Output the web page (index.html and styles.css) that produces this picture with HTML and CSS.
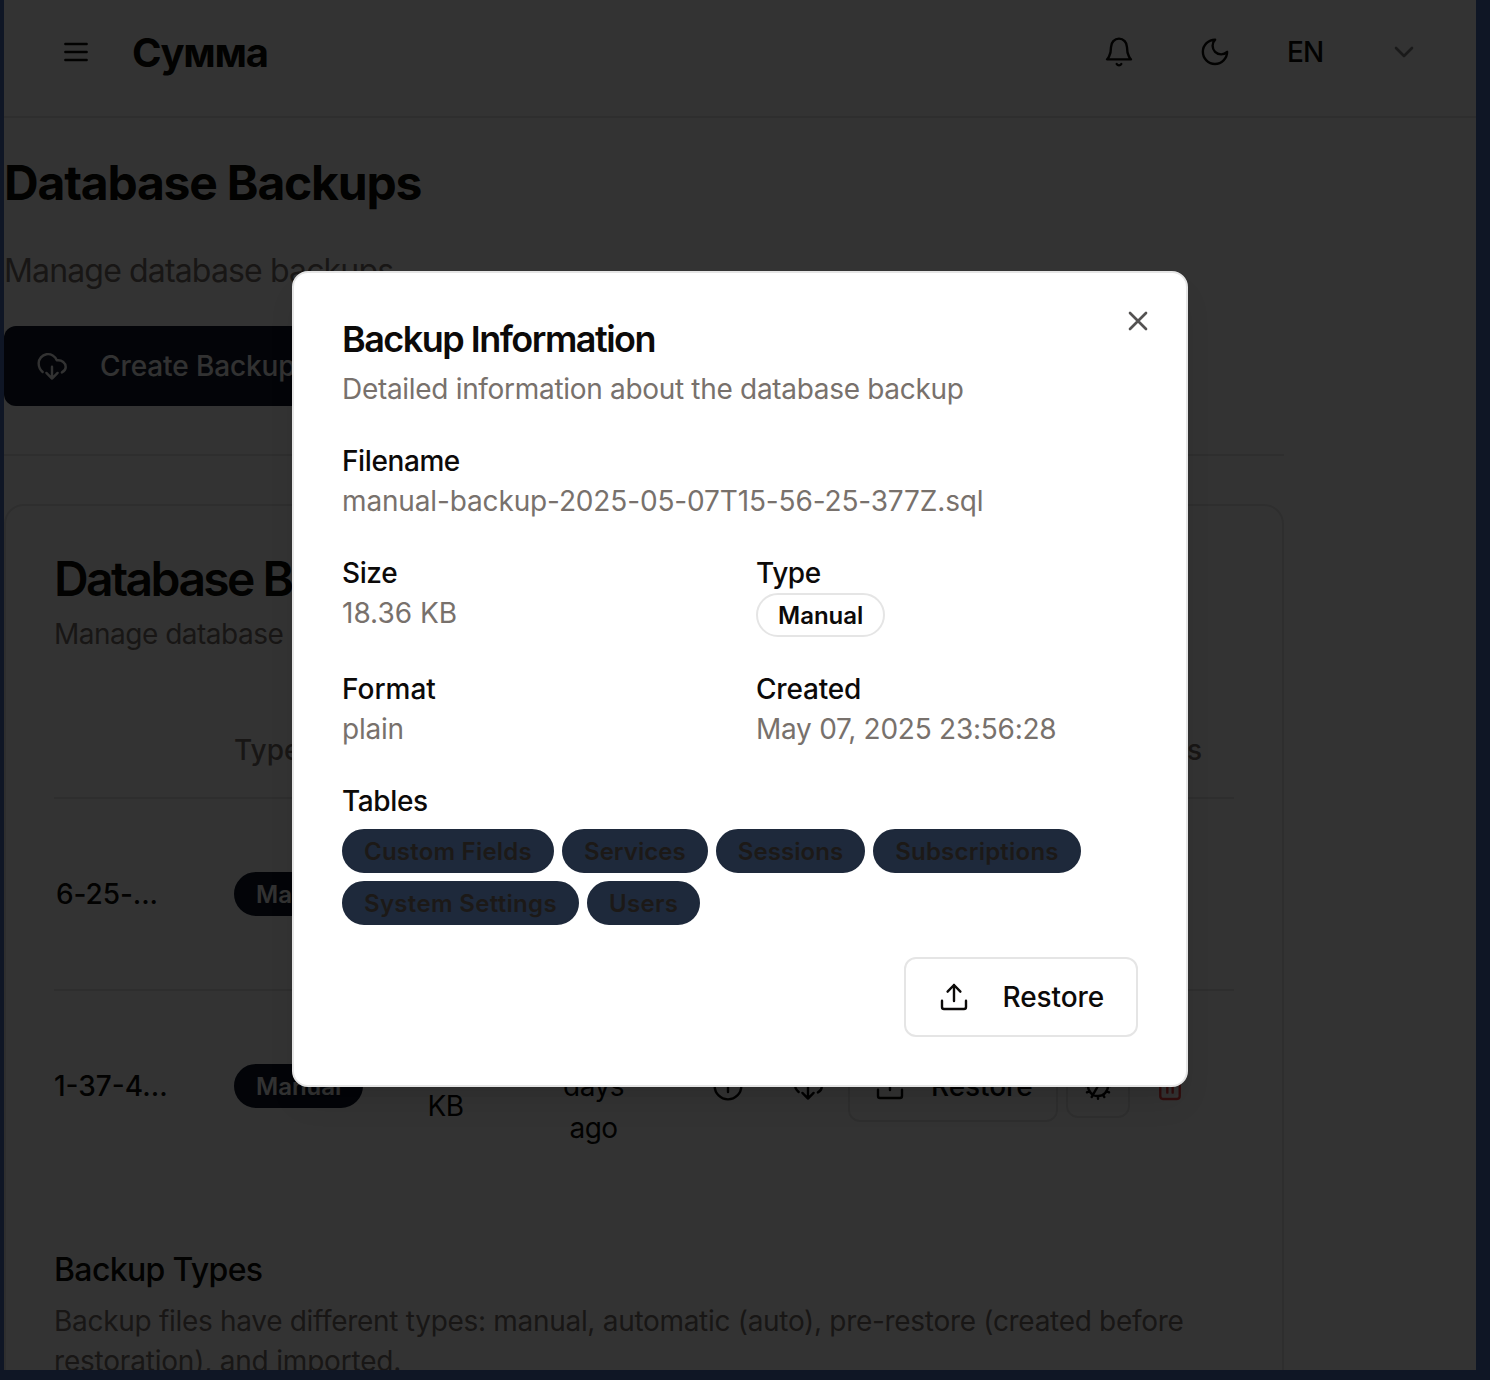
FILE: index.html
```html
<!DOCTYPE html>
<html lang="en">
<head>
<meta charset="utf-8">
<title>Database Backups</title>
<link rel="stylesheet" href="styles.css">
</head>
<body>
<svg class="sprite" aria-hidden="true">
  <symbol id="i-menu" viewBox="0 0 24 24"><path d="M4 6h16M4 12h16M4 18h16"/></symbol>
  <symbol id="i-bell" viewBox="0 0 24 24"><path d="M18 8.4c0-1.697-.632-3.325-1.757-4.525C15.117 2.675 13.59 2 12 2c-1.591 0-3.117.674-4.243 1.875C6.632 5.075 6 6.703 6 8.4 6 15.1 3 17.5 3 17.5h18s-3-2.4-3-9.1zM13.73 21a1.999 1.999 0 01-3.46 0"/></symbol>
  <symbol id="i-moon" viewBox="0 0 24 24"><path d="M12.1 2.8A6.3 6.3 0 0 0 21.1 11.9A9.1 9.1 0 1 1 12.1 2.8Z"/></symbol>
  <symbol id="i-chevron" viewBox="0 0 24 24"><path d="M6 9l6 6 6-6"/></symbol>
  <symbol id="i-cloud" viewBox="0 0 24 24"><path d="M5 16.5C3.2 15 2 12.5 2 10A7 7 0 0 1 15.6 7.8C19.5 7.3 22.3 9.8 22.3 12.8C22.3 14.5 21 16 19.4 16.8M12 12.6v8.8M7.8 17.2l4.2 4.2 4.2-4.2"/></symbol>
  <symbol id="i-upload" viewBox="0 0 24 24"><path d="M3 14.8V19.5Q3 21 4.5 21H19.5Q21 21 21 19.5V14.8M12 15V3M7.2 8L12 3l4.8 5"/></symbol>
  <symbol id="i-info" viewBox="0 0 24 24"><circle cx="12" cy="12" r="10"/><path d="M12 11v5.5M12 7.5v.01"/></symbol>
  <symbol id="i-gear" viewBox="0 0 24 24"><path d="M4.5 12a7.5 7.5 0 0015 0a7.5 7.5 0 10-15 0M12 12h7.5M12 12L8.25 5.5M12 12l-3.75 6.5M12 19.5V21.6M12 4.5V2.4M4.5 12H2.6M19.5 12h1.9M15.75 18.5l1 1.8M8.25 18.5l-1 1.8M18.5 15.75l1.8 1M5.5 15.75l-1.8 1M15.75 5.5l1-1.8M8.25 5.5l-1-1.8M18.5 8.25l1.8-1M5.5 8.25l-1.8-1"/></symbol>
  <symbol id="i-trash" viewBox="0 0 24 24"><path d="M4.7 7v12.5Q4.7 21.7 6.7 21.7H17.3Q19.3 21.7 19.3 19.5V7M2.5 6h19M8 6V3h8v3M10 11v6M14 11v6"/></symbol>
  <symbol id="i-close" viewBox="0 0 24 24"><path d="M18 6L6 18M6 6l12 12"/></symbol>
</svg>

<div class="app">
  <header class="topbar">
    <svg class="icon icon-menu"><use href="#i-menu"/></svg>
    <span class="brand">Сумма</span>
    <div class="topbar-actions">
      <svg class="icon"><use href="#i-bell"/></svg>
      <svg class="icon"><use href="#i-moon"/></svg>
      <div class="lang"><span class="lang-code">EN</span><svg class="icon icon-faded"><use href="#i-chevron"/></svg></div>
    </div>
  </header>

  <main class="page">
    <h1 class="page-title">Database Backups</h1>
    <p class="page-lead">Manage database backups</p>
    <button class="btn btn-primary"><svg class="icon"><use href="#i-cloud"/></svg><span class="btn-text">Create Backup</span></button>
    <hr class="divider">

    <section class="card">
      <h2 class="card-title">Database Backups</h2>
      <p class="card-lead">Manage database backups</p>

      <div class="table">
        <div class="row row-head">
          <span></span><span>Type</span><span></span><span></span><span class="actions-head">Actions</span>
        </div>
        <div class="row">
          <span class="name name-first">6-25-...</span>
          <span class="cell-type"><span class="pill pill-dark">Manual</span></span>
        </div>
        <div class="row row-last">
          <span class="name">1-37-4...</span>
          <span class="cell-type"><span class="pill pill-dark">Manual</span></span>
          <span class="cell-size">18.36<br>KB</span>
          <span class="cell-age">9<br>days<br>ago</span>
          <div class="row-actions">
            <div class="action-pair">
              <span class="icon-btn"><svg class="icon"><use href="#i-info"/></svg></span>
              <span class="icon-btn"><svg class="icon"><use href="#i-cloud"/></svg></span>
            </div>
            <span class="btn-row"><svg class="icon"><use href="#i-upload"/></svg><span class="btn-text">Restore</span></span>
            <span class="icon-btn icon-btn-outline"><svg class="icon"><use href="#i-gear"/></svg></span>
            <span class="icon-btn icon-btn-danger"><svg class="icon"><use href="#i-trash"/></svg></span>
          </div>
        </div>
      </div>

      <h3 class="types-title">Backup Types</h3>
      <p class="types-text">Backup files have different types: manual, automatic (auto), pre-restore (created before <br><span class="types-rest">restoration), and imported.</span></p>
    </section>
  </main>

  <div class="overlay"></div>

  <div class="dialog" role="dialog" aria-label="Backup Information">
    <svg class="icon dialog-close"><use href="#i-close"/></svg>
    <h2 class="dialog-title">Backup Information</h2>
    <p class="dialog-lead">Detailed information about the database backup</p>
    <div class="fields">
      <div class="field field-wide"><div class="label">Filename</div><div class="value value-file">manual-backup-2025-05-07T15-56-25-377Z.sql</div></div>
      <div class="field"><div class="label">Size</div><div class="value value-size">18.36 KB</div></div>
      <div class="field"><div class="label">Type</div><span class="pill">Manual</span></div>
      <div class="field"><div class="label label-format">Format</div><div class="value">plain</div></div>
      <div class="field"><div class="label label-created">Created</div><div class="value">May 07, 2025 23:56:28</div></div>
      <div class="field field-wide">
        <div class="label">Tables</div>
        <div class="chips">
          <span class="pill chip chip-long">Custom Fields</span><span class="pill chip">Services</span><span class="pill chip">Sessions</span><span class="pill chip chip-long">Subscriptions</span><span class="pill chip chip-wide">System Settings</span><span class="pill chip chip-wide">Users</span>
        </div>
      </div>
    </div>
    <div class="dialog-footer">
      <button class="btn btn-outline"><svg class="icon"><use href="#i-upload"/></svg><span class="btn-text">Restore</span></button>
    </div>
  </div>
</div>
</body>
</html>
```
FILE: styles.css
```css
* { box-sizing: border-box; }

body {
  margin: 0;
  height: 1380px;
  overflow: hidden;
  padding: 0 14px 10px 4px;
  background: #0f1625;
  font-family: Inter, "Noto Sans", sans-serif;
  font-size: 28px;
  line-height: 40px;
  color: #0c0a09;
}

h1, h2, h3, p { margin: 0; }

.sprite { position: absolute; width: 0; height: 0; }

.icon {
  display: block;
  flex: none;
  width: 32px;
  height: 32px;
  fill: none;
  stroke: currentColor;
  stroke-width: 1.8;
  stroke-linecap: round;
  stroke-linejoin: round;
}

.app {
  position: relative;
  height: 1370px;
  overflow: hidden;
  background: #fff;
}

/* Top bar */
.topbar {
  display: flex;
  align-items: center;
  height: 118px;
  padding: 0 56px 12px;
  border-bottom: 2px solid #e5e5e5;
}
.brand {
  margin-left: 40px;
  padding-top: 1px;
  font-size: 40px;
  font-weight: 700;
  line-height: 56px;
  letter-spacing: -1.3px;
}
.topbar-actions { display: flex; align-items: center; margin-left: auto; gap: 64px; }
.lang { display: flex; align-items: center; justify-content: space-between; width: 133px; margin-left: -8px; font-weight: 500; }
.lang-code { letter-spacing: -1px; }
.icon-faded { opacity: .5; stroke-width: 2; }

/* Page */
.page { display: flex; flex-direction: column; align-items: flex-start; width: 1280px; }
.page-title { margin-top: 41px; font-size: 48px; font-weight: 700; line-height: 48px; letter-spacing: -.025em; }
.page-lead { margin-top: 40px; font-size: 32px; line-height: 48px; letter-spacing: -.85px; color: #78716c; }
.btn {
  display: flex;
  align-items: center;
  gap: 32px;
  height: 80px;
  padding: 0 32px;
  border: 0;
  border-radius: 12px;
  background: none;
  font: inherit;
  font-weight: 500;
  color: inherit;
}
.btn-text { letter-spacing: -.1px; }
.btn-primary { margin-top: 31px; background: #0f172a; color: #fafaf9; }
.divider { width: 100%; height: 2px; margin: 48px 0; border: 0; background: #e5e5e5; }

/* Card */
.card {
  width: 100%;
  height: 1000px;
  padding: 48px;
  border: 2px solid #e5e5e5;
  border-radius: 20px;
}
.card-title { margin-top: 1px; font-size: 48px; font-weight: 600; line-height: 48px; letter-spacing: -2.6px; }
.card-lead { margin-top: 11px; letter-spacing: -.5px; color: #78716c; }

.table { margin-top: 49px; }
.row {
  display: grid;
  grid-template-columns: 180px 162px 98px 198px 1fr;
  align-items: center;
  height: 192px;
  border-bottom: 2px solid #e5e5e5;
}
.row-last { border-bottom-color: transparent; }
.row-head { height: 96px; font-weight: 500; color: #78716c; }
.actions-head { justify-self: end; margin-right: 32px; }
.name { font-weight: 500; }
.name-first { padding-left: 2px; letter-spacing: -.1px; }
.cell-type { display: flex; }
.cell-size, .cell-age { text-align: center; letter-spacing: -.5px; }
.cell-size { padding-left: 1px; }
.cell-age { padding-left: 1px; line-height: 42px; }
.row-actions { display: flex; align-items: center; gap: 8px; padding-left: 4px; }
.action-pair { display: flex; gap: 16px; }
.icon-btn { display: flex; align-items: center; justify-content: center; width: 64px; height: 64px; border-radius: 12px; }
.icon-btn-outline { border: 2px solid #e5e5e5; }
.icon-btn-danger { color: #ef4444; }
.btn-row {
  display: flex;
  align-items: center;
  gap: 25px;
  width: 210px;
  height: 71px;
  padding-left: 24px;
  border: 2px solid #e5e5e5;
  border-radius: 12px;
  font-weight: 500;
}

.types-title { margin-top: 63px; font-size: 32px; font-weight: 500; line-height: 48px; letter-spacing: -.65px; }
.types-text { margin-top: 7px; letter-spacing: -.3px; color: #78716c; white-space: nowrap; }
.types-rest { letter-spacing: -.2px; }

/* Pills */
.pill {
  display: flex;
  align-items: center;
  width: max-content;
  height: 44px;
  padding: 2px 20px 0;
  border: 2px solid #e5e5e5;
  border-radius: 22px;
  font-size: 24px;
  font-weight: 600;
  line-height: 32px;
}
.pill-dark { border-color: #0f172a; background: #0f172a; color: #fafaf9; }

.overlay { position: absolute; inset: 0; background: rgba(0, 0, 0, .8); }

/* Dialog */
.dialog {
  position: absolute;
  top: 271px;
  left: 288px;
  width: 896px;
  height: 816px;
  padding: 48px;
  border: 2px solid #e5e5e5;
  border-radius: 16px;
  background: #fff;
  box-shadow: 0 20px 30px -6px rgba(0, 0, 0, .1), 0 8px 12px -8px rgba(0, 0, 0, .1);
}
.dialog-close { position: absolute; top: 32px; right: 32px; opacity: .7; stroke-width: 2; }
.dialog-title { font-size: 36px; font-weight: 600; line-height: 36px; letter-spacing: -1.52px; }
.dialog-lead { margin-top: 12px; letter-spacing: -.31px; color: #78716c; }
.fields { display: grid; grid-template-columns: 1fr 1fr; gap: 32px; margin-top: 32px; }
.field-wide { grid-column: 1 / -1; }
.label { font-weight: 500; letter-spacing: -.4px; }
.label-format { letter-spacing: 0; }
.label-created { letter-spacing: -.2px; }
.value { letter-spacing: -.25px; color: #78716c; }
.value-file { letter-spacing: -.14px; }
.value-size { letter-spacing: 0; }
.chips { display: flex; flex-wrap: wrap; gap: 8px; margin-top: 8px; }
.chip { border-color: #1e293b; background: #1e293b; color: #1c1917; letter-spacing: .05px; }
.chip-long { letter-spacing: .22px; }
.chip-wide { letter-spacing: .32px; }
.dialog-footer { display: flex; justify-content: flex-end; margin-top: 32px; }
.btn-outline { gap: 33px; border: 2px solid #e5e5e5; }
```
